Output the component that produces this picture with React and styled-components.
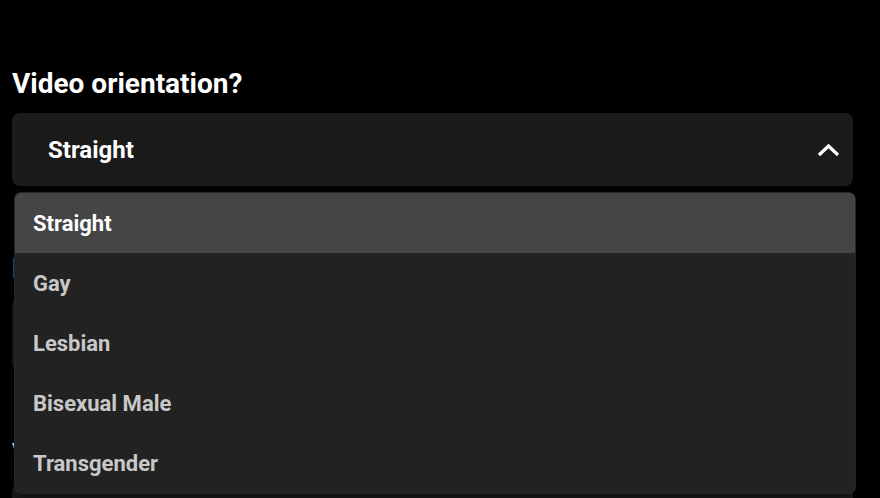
import React, { useState } from 'react';
import styled, { createGlobalStyle } from 'styled-components';

const GlobalStyle = createGlobalStyle`
  html, body {
    margin: 0;
    background: #000;
    overflow: hidden;
  }
  body {
    font-family: Roboto, "Noto Sans", Arial, sans-serif;
    color: #fff;
  }
`;

const Page = styled.div`
  width: 841px;
  padding: 68px 0 0 12px;
`;

const Field = styled.div`
  position: relative;
  margin-bottom: 67px;
`;

const Label = styled.div`
  height: 31px;
  line-height: 31px;
  font-size: 28px;
  font-weight: 700;
  margin-bottom: 14px;
  white-space: nowrap;
`;

const SelectBox = styled.div`
  height: 73px;
  box-sizing: border-box;
  border-radius: 8px;
  background: #1b1b1b;
  display: flex;
  align-items: center;
  justify-content: space-between;
  padding: 0 13px 0 36px;
  font-size: 24px;
  font-weight: 700;
`;

const Menu = styled.ul`
  position: absolute;
  top: 125px;
  left: 3px;
  width: 840px;
  margin: 0;
  padding: 0;
  list-style: none;
  background: #222;
  border-radius: 6px;
  overflow: hidden;
  box-shadow: 0 0 0 1px #262626, 0 4px 10px rgba(0, 0, 0, 0.5);
  z-index: 2;
`;

const Option = styled.li`
  height: 60px;
  display: flex;
  align-items: center;
  padding-left: 18px;
  font-size: 22px;
  font-weight: 700;
  color: ${p => (p.$active ? '#fff' : '#c8c8c8')};
  background: ${p => (p.$active ? '#454545' : 'transparent')};
`;

const Chevron = ({ up }) => (
  <svg width="23" height="14" viewBox="0 0 23 14">
    <polyline
      points={up ? '2,12 11.5,3 21,12' : '2,2 11.5,11 21,2'}
      fill="none"
      stroke="#fff"
      strokeWidth="3.2"
    />
  </svg>
);

const options = ['Straight', 'Gay', 'Lesbian', 'Bisexual Male', 'Transgender'];

export default function App() {
  const [value] = useState('Straight');

  return (
    <Page>
      <GlobalStyle />
      <Field>
        <Label>Video orientation?</Label>
        <SelectBox>
          <span>{value}</span>
          <Chevron up />
        </SelectBox>
        <Menu>
          {options.map(o => (
            <Option key={o} $active={o === value}>{o}</Option>
          ))}
        </Menu>
      </Field>
      <Field>
        <Label>Duration?</Label>
        <SelectBox>
          <span>Any</span>
          <Chevron />
        </SelectBox>
      </Field>
      <Field>
        <Label>Video quality?</Label>
        <SelectBox>
          <span>Any</span>
          <Chevron />
        </SelectBox>
      </Field>
    </Page>
  );
}
